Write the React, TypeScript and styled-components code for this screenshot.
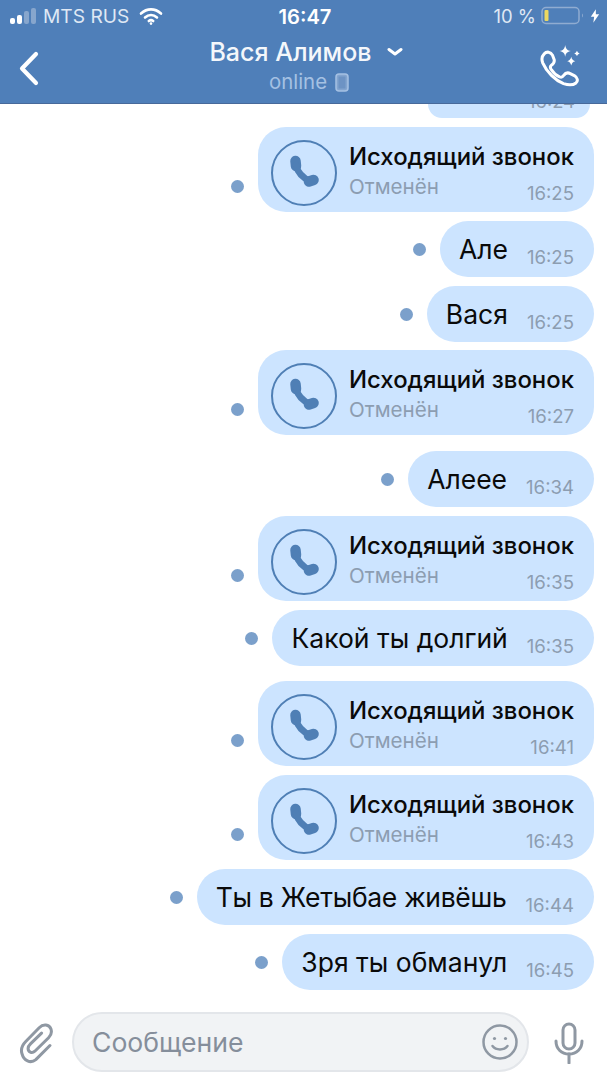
import React from "react";
import styled, { createGlobalStyle } from "styled-components";

const Global = createGlobalStyle`
  html, body { margin: 0; padding: 0; background: #fff; }
  body { font-family: Inter, "Noto Sans", "Liberation Sans", sans-serif; }
  * { box-sizing: border-box; }
`;
const Page = styled.div`
  width: 607px; height: 1080px; display: flex; flex-direction: column; overflow: hidden; background: #fff;
`;
const Header = styled.header`
  height: 104px; flex: none; background: #4f7fb9; border-bottom: 1px solid #47699a;
  display: flex; flex-direction: column; color: #fff; position: relative; z-index: 1;
`;
const StatusBar = styled.div`
  height: 32px; padding: 0 7px 0 10px; display: grid; grid-template-columns: 1fr auto 1fr; align-items: center;
  font-size: 19.2px; color: #dfe8f4;
`;
const StatusLeft = styled.div`display: flex; align-items: center; gap: 5px;`;
const StatusRight = styled.div`display: flex; align-items: center; justify-content: flex-end; gap: 5px; font-size: 18.5px;`;
const Clock = styled.div`font-weight: 600; color: #fff; font-size: 20.2px;`;
const Nav = styled.div`
  flex: 1; display: grid; grid-template-columns: 90px 1fr 90px; align-items: start;
`;
const Back = styled.div`padding: 19px 0 0 18px;`;
const Title = styled.div`display: flex; flex-direction: column; align-items: center; padding-top: 5px;`;
const Name = styled.div`
  font-size: 25px; font-weight: 500; line-height: 30px; display: flex; align-items: center; gap: 15px; color: #f4f7fb; margin-left: 5px;
`;
const Online = styled.div`
  font-size: 20.4px; line-height: 28px; color: #a5c1e3; display: flex; align-items: center; gap: 8px; padding-top: 1px; margin-left: 11px;
`;
const CallAction = styled.div`display: flex; justify-content: flex-end; padding: 13px 25px 0 0;`;
const List = styled.main`
  flex: 1; min-height: 0; overflow: hidden; display: flex; flex-direction: column; align-items: flex-end; padding-right: 13px;
`;
const Clipped = styled.div`
  width: 162px; height: 14px; margin-right: 4px; background: #cce4ff; border-radius: 0 0 26px 26px; flex: none;
  overflow: hidden; display: flex; justify-content: flex-end; padding-right: 15px;
`;
const ClippedTime = styled.span`
  font-size: 18.4px; line-height: 14px; height: 14px; margin-top: -10px; color: #8c9db1;
`;
const Row = styled.div<{ $gap: number }>`
  display: flex; align-items: center; gap: 14px; margin-top: ${(p) => p.$gap}px; flex: none;
`;
const Dot = styled.span<{ $lift?: number }>`
  width: 13px; height: 13px; border-radius: 50%; background: #7ba0cb; flex: none;
  align-self: ${(p) => (p.$lift ? "flex-end" : "center")};
  margin-bottom: ${(p) => p.$lift ?? 0}px;
`;
const Bubble = styled.div`
  height: 56px; background: #cce4ff; border-radius: 28px; display: flex; align-items: flex-start; padding: 0 20px 0 19px; gap: 19px; position: relative;
`;
const Text = styled.span<{ $squeeze?: number }>`
  font-size: 26.5px; line-height: 56px; color: #0a0a0a; white-space: nowrap;
  letter-spacing: ${(p) => p.$squeeze ?? 0}px;
`;
const Time = styled.span`
  font-size: 18.6px; line-height: 22px; color: #8c9db1; align-self: flex-end; padding-bottom: 9px; height: 31px; white-space: nowrap;
`;
const CallBubble = styled.div`
  width: 336px; height: 85px; background: #cce4ff; border-radius: 28px; display: flex; gap: 12px; padding: 13px 20px 0 13px; position: relative;
`;
const CallRing = styled.div`
  width: 66px; height: 66px; border-radius: 50%; border: 2.5px solid #4f7fb5; flex: none; display: flex; align-items: center; justify-content: center;
`;
const CallBody = styled.div`flex: 1; display: flex; flex-direction: column; padding-top: 2px;`;
const CallTitle = styled.div`font-size: 23.9px; font-weight: 500; line-height: 30px; color: #0a0a0a; white-space: nowrap;`;
const CallMeta = styled.div`display: flex; justify-content: space-between; align-items: flex-start;`;
const CallStatus = styled.span`font-size: 20.6px; line-height: 30px; color: #8c9db1;`;
const CallTime = styled.span`font-size: 18.6px; line-height: 22px; color: #8c9db1; margin-top: 10px;`;
const Composer = styled.footer`
  height: 90px; flex: none; display: flex; align-items: flex-start; padding: 22px 0 0 18px;
`;
const Clip = styled.svg`margin-top: 10px; flex: none;`;
const Field = styled.div`
  width: 457px; height: 60px; margin: 0 0 0 17px; border-radius: 30px; background: #f1f3f5; border: 2px solid #e3e6ea;
  display: flex; align-items: center; justify-content: space-between; padding: 0 7px 0 18px; font-size: 26.6px; color: #858e9b;
`;
const Mic = styled.div`margin: 10px 0 0 24px;`;

const Phone = () => (
  <svg width="32" height="36" viewBox="0 0 32 36" fill="none" stroke="#4f7fb5" strokeLinecap="round">
    <path d="M7.500 6 8 11" strokeWidth="10.500" />
    <path d="M8 10Q10.500 21 22 26" strokeWidth="6.500" />
    <path d="M21 26.500 25.500 25" strokeWidth="10.500" />
  </svg>
);
const Call = ({ time, gap }: { time: string; gap: number }) => (
  <Row $gap={gap}>
    <Dot $lift={19} />
    <CallBubble>
      <CallRing><Phone /></CallRing>
      <CallBody>
        <CallTitle>Исходящий звонок</CallTitle>
        <CallMeta>
          <CallStatus>Отменён</CallStatus>
          <CallTime>{time}</CallTime>
        </CallMeta>
      </CallBody>
    </CallBubble>
  </Row>
);
const Msg = ({ text, time, gap, squeeze }: { text: string; time: string; gap: number; squeeze?: number }) => (
  <Row $gap={gap}>
    <Dot />
    <Bubble>
      <Text $squeeze={squeeze}>{text}</Text>
      <Time>{time}</Time>
    </Bubble>
  </Row>
);

export default function App() {
  return (
    <Page>
      <Global />
      <Header>
        <StatusBar>
          <StatusLeft>
            <svg width="28" height="18" viewBox="0 0 28 18">
              <rect x="0" y="11" width="5" height="6" rx="2" fill="#fff" />
              <rect x="7" y="8" width="5" height="9" rx="2" fill="#fff" />
              <rect x="14" y="4" width="5" height="13" rx="2" fill="#87a6cd" />
              <rect x="21" y="1" width="5" height="16" rx="2" fill="#87a6cd" />
            </svg>
            <span>MTS RUS</span>
            <svg width="24" height="18" viewBox="0 0 24 18" fill="none" stroke="#fff" strokeWidth="2.600" strokeLinecap="round" style={{ marginLeft: 5 }}>
              <path d="M2 6.500c6-5.500 14-5.500 20 0" />
              <path d="M6 10.500c3.600-3.200 8.400-3.200 12 0" />
              <path d="M9.800 14c1.300-1 3.100-1 4.400 0" />
              <path d="M12 16.500v.1" />
            </svg>
          </StatusLeft>
          <Clock>16:47</Clock>
          <StatusRight>
            <span>10 %</span>
            <svg width="44" height="20" viewBox="0 0 44 20" fill="none">
              <rect x="1" y="1.500" width="37" height="16" rx="4" stroke="#90acd1" strokeWidth="1.500" />
              <rect x="3.500" y="4" width="4" height="11" rx="1" fill="#ecd860" />
              <path d="M41 7.500c1.200.4 1.200 3.600 0 4z" fill="#90acd1" />
            </svg>
            <svg width="10" height="18" viewBox="0 0 12 18"><path d="M7 1 1 10h4l-1 7 7-10H7z" fill="#fff" /></svg>
          </StatusRight>
        </StatusBar>
        <Nav>
          <Back>
            <svg width="24" height="36" viewBox="0 0 24 36" fill="none" stroke="#fff" strokeWidth="4.200" strokeLinecap="round" strokeLinejoin="round">
              <path d="M18 3 4 17.500 18 32" />
            </svg>
          </Back>
          <Title>
            <Name>
              Вася Алимов
              <svg width="16" height="10" viewBox="0 0 16 10" fill="none" stroke="#fff" strokeWidth="3" strokeLinecap="round" strokeLinejoin="round">
                <path d="M2 2.500 8 7l6-4.500" />
              </svg>
            </Name>
            <Online>
              online
              <svg width="14" height="19" viewBox="0 0 14 19" fill="none">
                <rect x="1" y="1" width="12" height="17" rx="3" fill="#83a4cf" stroke="#a5c1e3" strokeWidth="1.500" />
                <rect x="3.500" y="3.500" width="7" height="12" fill="#6d93c4" />
              </svg>
            </Online>
          </Title>
          <CallAction>
            <svg width="42" height="42" viewBox="30 15 125 125" fill="none">
              <path d="M42 42C50 33 62 35 67 45L72 58C74 66 70 71 64 75C60 78 60 82 63 87C70 98 78 105 88 110C93 112 97 111 100 106C105 99 112 96 120 100L132 106C142 112 144 122 137 128C128 135 115 135 100 130C75 120 50 95 38 68C34 57 36 48 42 42Z" stroke="#fff" strokeWidth="9" strokeLinejoin="round" />
              <path d="M105 15C107 27 111 31 122 33C111 35 107 39 105 50C103 39 99 35 88 33C99 31 103 27 105 15Z" fill="#fff" />
              <path d="M123 50C125 58 127 60 135 63C127 65 125 68 123 76C121 68 119 65 111 63C119 60 121 58 123 50Z" fill="#fff" />
              <path d="M140 32 143 37 148 40 143 43 140 48 137 43 132 40 137 37Z" fill="#fff" />
            </svg>
          </CallAction>
        </Nav>
      </Header>
      <List>
        <Clipped><ClippedTime>16:24</ClippedTime></Clipped>
        <Call time="16:25" gap={9} />
        <Msg text="Але" time="16:25" gap={9} />
        <Msg text="Вася" time="16:25" gap={9} />
        <Call time="16:27" gap={8} />
        <Msg text="Алеее" time="16:34" gap={16} />
        <Call time="16:35" gap={9} />
        <Msg text="Какой ты долгий" time="16:35" gap={9} />
        <Call time="16:41" gap={15} />
        <Call time="16:43" gap={9} />
        <Msg text="Ты в Жетыбае живёшь" time="16:44" gap={9} squeeze={-0.3} />
        <Msg text="Зря ты обманул" time="16:45" gap={9} />
      </List>
      <Composer>
        <Clip width="37" height="42" viewBox="55 35 110 125" fill="none" stroke="#8f98a3" strokeWidth="9" strokeLinecap="round" strokeLinejoin="round">
          <path d="M150 105 108 147C92 160 72 150 67 130C62 115 68 103 78 93L118 52C130 40 148 42 153 56C157 68 152 76 146 82L105 122C96 130 85 124 85 114C85 108 88 104 92 100L125 68" />
        </Clip>
        <Field>
          <span>Сообщение</span>
          <svg width="36" height="36" viewBox="0 0 36 36" fill="none" stroke="#8f98a3" strokeWidth="2.500" strokeLinecap="round" style={{ marginRight: 2 }}>
            <circle cx="18" cy="18" r="16.500" />
            <circle cx="12.500" cy="14.500" r="1.600" fill="#8f98a3" stroke="none" />
            <circle cx="23.500" cy="14.500" r="1.600" fill="#8f98a3" stroke="none" />
            <path d="M10.500 22c3.500 4.500 11.500 4.500 15 0" />
          </svg>
        </Field>
        <Mic>
          <svg width="32" height="42" viewBox="0 0 32 42" fill="none" stroke="#8f98a3" strokeWidth="3" strokeLinecap="round">
            <rect x="10" y="2" width="12" height="25" rx="6" />
            <path d="M3 19c0 8 5.500 13 13 13s13-5 13-13" />
            <path d="M16 32v9" />
          </svg>
        </Mic>
      </Composer>
    </Page>
  );
}
